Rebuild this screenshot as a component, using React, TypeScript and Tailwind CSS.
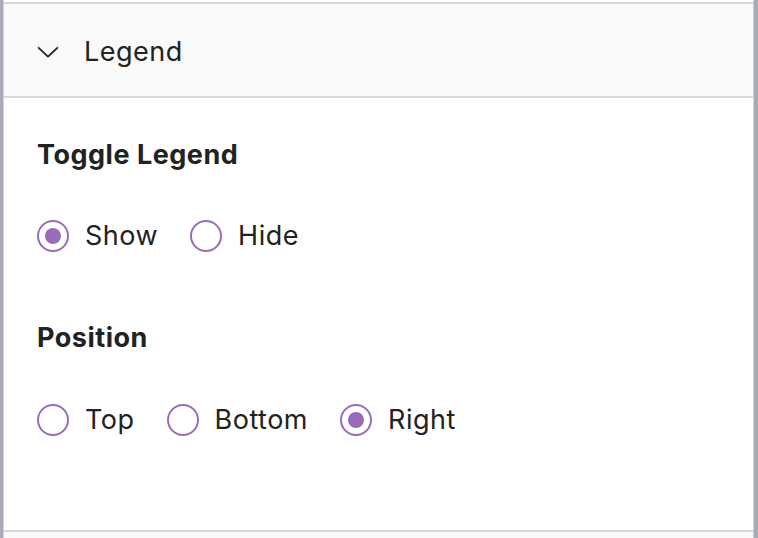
import { useState } from 'react';

type Opt = { value: string; label: string };

function RadioRow({ options, value, onChange }: { options: Opt[]; value: string; onChange: (v: string) => void }) {
  return (
    <div className="flex items-center gap-8">
      {options.map(o => {
        const checked = o.value === value;
        return (
          <label key={o.value} className="flex items-center gap-4 cursor-pointer" onClick={() => onChange(o.value)}>
            <span className="w-8 h-8 rounded-full border-2 border-[#9a6bb8] bg-white flex items-center justify-center">
              {checked && <span className="w-4 h-4 rounded-full bg-[#9a6bb8]" />}
            </span>
            <span className="text-[27px] tracking-[0.5px] text-[#222] leading-8">{o.label}</span>
          </label>
        );
      })}
    </div>
  );
}

export default function App() {
  const [show, setShow] = useState('show');
  const [pos, setPos]   = useState('right');

  return (
    <div className="w-[758px] h-[538px] flex bg-white overflow-hidden" style={{ fontFamily: 'Inter, "Noto Sans", sans-serif' }}>
      <div className="w-[3px] bg-[#a7abb8]" />
      <div className="flex-1 flex flex-col pt-[2px] border-l border-r border-[#d3d3d3]">
        {/* Accordion header */}
        <div className="h-[96px] border-y-2 border-[#d8d8d8] bg-[#f9f9f9] flex items-center pl-[30px] pt-[4px] gap-[22px]">
          <svg width="28" height="28" viewBox="0 0 24 24" fill="none" stroke="#222" strokeWidth="1.6" strokeLinecap="round" strokeLinejoin="round">
            <polyline points="4,8.5 12,16 20,8.5" />
          </svg>
          <span className="text-[27px] tracking-[0.5px] text-[#222]">Legend</span>
        </div>

        {/* Panel body */}
        <div className="h-[432px] pl-[33px] pt-[41px]">
          <div className="text-[27px] tracking-[0.5px] font-bold text-[#222] leading-8">Toggle Legend</div>
          <div className="mt-[49px]">
            <RadioRow value={show} onChange={setShow}
              options={[{ value: 'show', label: 'Show' }, { value: 'hide', label: 'Hide' }]} />
          </div>
          <div className="mt-[70px] text-[27px] tracking-[0.5px] font-bold text-[#222] leading-8">Position</div>
          <div className="mt-[50px]">
            <RadioRow value={pos} onChange={setPos}
              options={[{ value: 'top', label: 'Top' }, { value: 'bottom', label: 'Bottom' }, { value: 'right', label: 'Right' }]} />
          </div>
        </div>

        <div className="flex-1 border-t-2 border-[#d8d8d8] bg-[#f9f9f9]" />
      </div>
      <div className="w-[4px] bg-[#a7abb8]" />
    </div>
  );
}
